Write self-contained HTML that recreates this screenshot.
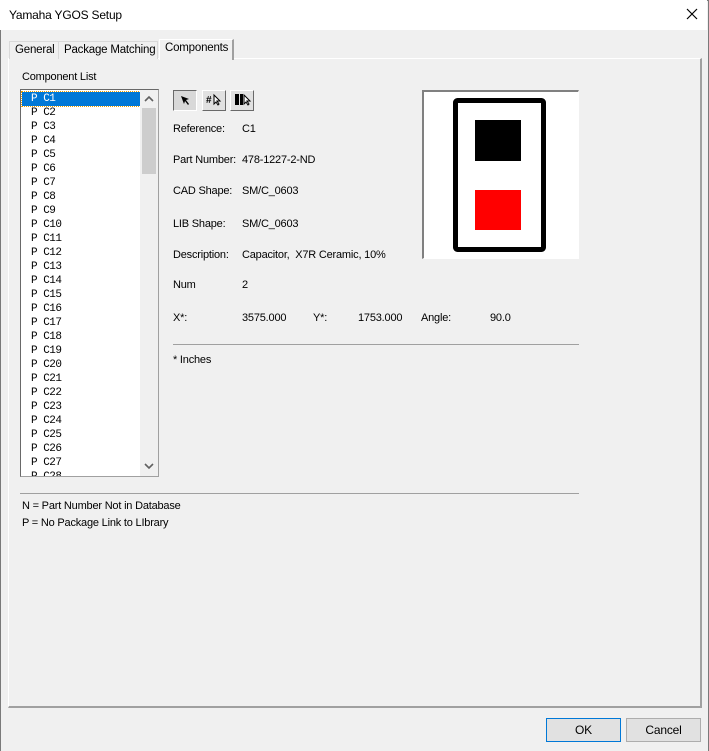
<!DOCTYPE html>
<html><head><style>
*{margin:0;padding:0;box-sizing:border-box}
body{width:709px;height:751px;background:#f0f0f0;font-family:"Liberation Sans",Arial,sans-serif;font-size:11px;letter-spacing:-0.2px;color:#000;position:relative;overflow:hidden}
.a{position:absolute;white-space:nowrap}
#win{position:absolute;left:0;top:0;width:709px;height:751px;border:1px solid #7a7a7a;border-bottom:none}
#title{position:absolute;left:0;top:0;width:707px;height:30px;background:#fff}
.tab{position:absolute;top:41px;height:18px;border:1px solid #d9d9d9;border-bottom:none;background:#f0f0f0;font-size:11.5px;padding:2px 0 0 5px;white-space:nowrap}
#panel{position:absolute;left:8px;top:58px;width:694px;height:650px;border-right:2px solid #a0a0a0;border-bottom:2px solid #a0a0a0;border-top:1px solid #fff;border-left:1px solid #fff}
#list{position:absolute;left:20px;top:89px;width:139px;height:388px;border:1px solid #a0a0a0;border-top-color:#696969;border-left-color:#696969;background:#fff;overflow:hidden}
.r{position:absolute;left:1px;width:118px;height:14px;font-family:"Liberation Mono",monospace;font-size:11px;line-height:14px;padding-left:9px;letter-spacing:-0.5px}
.btn{position:absolute;width:24px;height:21px;background:#e1e1e1;border:1px solid #fff;border-right-color:#696969;border-bottom-color:#696969;font-size:11px;font-weight:bold;text-align:center;line-height:18px}
.pb{position:absolute;top:718px;width:75px;height:24px;border:1px solid #adadad;background:#e1e1e1;font-size:12px;text-align:center;line-height:22px}
</style></head><body>
<div id="win"></div>
<div id="title"></div>
<div class="a" style="left:9px;top:8px;font-size:12px">Yamaha YGOS Setup</div>
<svg class="a" style="left:686px;top:8px" width="12" height="12"><path d="M1 1L11 11M11 1L1 11" stroke="#000" stroke-width="1.2"/></svg>
<div id="panel"></div>
<div class="tab" style="left:9px;width:50px">General</div>
<div class="tab" style="left:58px;width:100px">Package Matching</div>
<div class="tab" style="left:159px;top:39px;height:21px;width:75px;border-color:#fff #a0a0a0 #f0f0f0 #fff;border-right:2px solid #a0a0a0;padding-top:2px">Components</div>
<div class="a" style="left:22px;top:71px">Component List</div>
<div id="list">
<div class="r" style="top:2px;background:#0078d7;color:#fff;outline:1px dotted #f0a000">P C1</div>
<div class="r" style="top:16px">P C2</div><div class="r" style="top:30px">P C3</div><div class="r" style="top:44px">P C4</div>
<div class="r" style="top:58px">P C5</div><div class="r" style="top:72px">P C6</div><div class="r" style="top:86px">P C7</div>
<div class="r" style="top:100px">P C8</div><div class="r" style="top:114px">P C9</div><div class="r" style="top:128px">P C10</div>
<div class="r" style="top:142px">P C11</div><div class="r" style="top:156px">P C12</div><div class="r" style="top:170px">P C13</div>
<div class="r" style="top:184px">P C14</div><div class="r" style="top:198px">P C15</div><div class="r" style="top:212px">P C16</div>
<div class="r" style="top:226px">P C17</div><div class="r" style="top:240px">P C18</div><div class="r" style="top:254px">P C19</div>
<div class="r" style="top:268px">P C20</div><div class="r" style="top:282px">P C21</div><div class="r" style="top:296px">P C22</div>
<div class="r" style="top:310px">P C23</div><div class="r" style="top:324px">P C24</div><div class="r" style="top:338px">P C25</div>
<div class="r" style="top:352px">P C26</div><div class="r" style="top:366px">P C27</div><div class="r" style="top:380px">P C28</div>
<div class="a" style="left:119px;top:0;width:18px;height:386px;background:#f0f0f0"></div>
<div class="a" style="left:121px;top:18px;width:14px;height:66px;background:#cdcdcd"></div>
<svg class="a" style="left:123px;top:5px" width="10" height="8"><path d="M1 6L5 2L9 6" stroke="#606060" stroke-width="1.6" fill="none"/></svg>
<svg class="a" style="left:123px;top:372px" width="10" height="8"><path d="M1 2L5 6L9 2" stroke="#606060" stroke-width="1.6" fill="none"/></svg>
</div>
<div class="btn" style="left:173px;top:90px;border-color:#696969 #fff #fff #696969;background:#d8d8d8">
<svg width="14" height="14" style="margin-top:2px"><path d="M3 3L11 6L8 7L11 11L10 12L7 8L6 11Z" fill="#000"/></svg></div>
<div class="btn" style="left:202px;top:90px"><svg width="20" height="14" style="margin-top:2px"><text x="2" y="10" font-size="10" font-weight="bold" font-family="Liberation Sans">#</text><path d="M10 2L10 11L12 9L14 12L15 11L13 8L16 8Z" fill="#fff" stroke="#000"/></svg></div>
<div class="btn" style="left:230px;top:90px"><svg width="20" height="14" style="margin-top:2px"><rect x="3" y="1" width="4" height="11" fill="#000"/><rect x="8" y="1" width="3" height="11" fill="#000"/><path d="M12 2L12 11L14 9L16 12L17 11L15 8L18 8Z" fill="#fff" stroke="#000"/></svg></div>
<div class="a" style="left:173px;top:123px">Reference:</div><div class="a" style="left:242px;top:123px">C1</div>
<div class="a" style="left:173px;top:154px">Part Number:</div><div class="a" style="left:242px;top:154px">478-1227-2-ND</div>
<div class="a" style="left:173px;top:185px">CAD Shape:</div><div class="a" style="left:242px;top:185px">SM/C_0603</div>
<div class="a" style="left:173px;top:218px">LIB Shape:</div><div class="a" style="left:242px;top:218px">SM/C_0603</div>
<div class="a" style="left:173px;top:249px">Description:</div><div class="a" style="left:242px;top:249px">Capacitor,&nbsp; X7R Ceramic, 10%</div>
<div class="a" style="left:173px;top:279px">Num</div><div class="a" style="left:242px;top:279px">2</div>
<div class="a" style="left:173px;top:312px">X*:</div><div class="a" style="left:242px;top:312px">3575.000</div>
<div class="a" style="left:313px;top:312px">Y*:</div><div class="a" style="left:358px;top:312px">1753.000</div>
<div class="a" style="left:421px;top:312px">Angle:</div><div class="a" style="left:490px;top:312px">90.0</div>
<div class="a" style="left:173px;top:344px;width:406px;height:1px;background:#a0a0a0"></div>
<div class="a" style="left:173px;top:354px">* Inches</div>
<div class="a" style="left:422px;top:90px;width:157px;height:169px;background:#fff;border:1px solid #fff;border-top:2px solid #808080;border-left:2px solid #808080"></div>
<svg class="a" style="left:422px;top:90px" width="157" height="169">
<rect x="33.5" y="10.5" width="88" height="149" rx="2" fill="none" stroke="#000" stroke-width="5"/>
<rect x="53" y="30" width="46" height="41" fill="#000"/>
<rect x="53" y="100" width="46" height="40" fill="#f00"/>
</svg>
<div class="a" style="left:20px;top:493px;width:559px;height:1px;background:#a0a0a0"></div>
<div class="a" style="left:22px;top:500px">N = Part Number Not in Database</div>
<div class="a" style="left:22px;top:517px">P = No Package Link to LIbrary</div>
<div class="pb" style="left:546px;border:1px solid #0078d7">OK</div>
<div class="pb" style="left:626px">Cancel</div>
</body></html>
